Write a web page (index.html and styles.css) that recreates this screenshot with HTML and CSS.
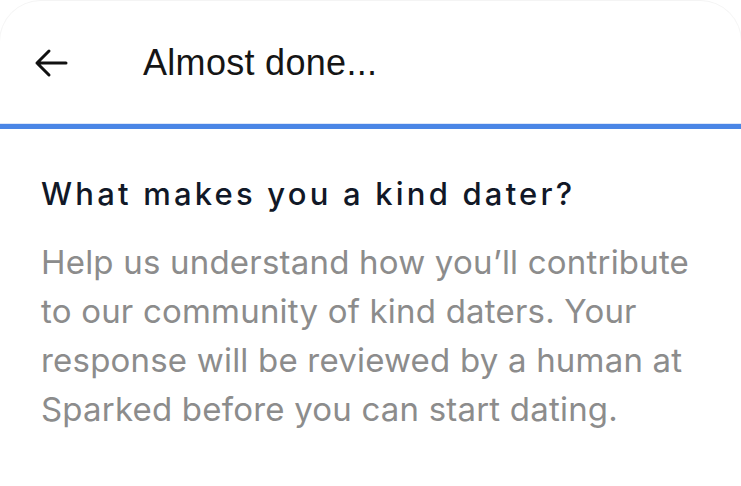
FILE: index.html
```html
<!DOCTYPE html>
<html>
<head>
<meta charset="utf-8">
<link rel="stylesheet" href="styles.css">
</head>
<body>
<div class="screen">
  <header class="topbar">
    <button class="back" aria-label="Back">
      <svg width="34" height="30" viewBox="0 0 34 30"><path d="M32 15H3M15 3L3 15l12 12" fill="none" stroke="#111" stroke-width="3" stroke-linecap="round" stroke-linejoin="round"/></svg>
    </button>
    <h1 class="title">Almost done...</h1>
  </header>
  <div class="progress"></div>
  <main class="content">
    <h2 class="question">What makes you a kind dater?</h2>
    <p class="desc">Help us understand how you’ll contribute to our community of kind daters. Your response will be reviewed by a human at Sparked before you can start dating.</p>
  </main>
</div>
</body>
</html>
```
FILE: styles.css
```css
html, body { margin: 0; padding: 0; background: #fff; }
body { width: 741px; height: 486px; overflow: hidden; }
.screen {
  height: 486px;
  border-top: 1px solid #f4f4f4;
  border-left: 1px solid #f6f6f6;
  border-right: 1px solid #f6f6f6;
  border-radius: 42px 42px 0 0;
  box-sizing: border-box;
  margin: 0 -1px;
}
.topbar {
  display: flex;
  align-items: center;
  height: 123px;
  box-sizing: border-box;
  padding: 0 0 0 34px;
}
.back {
  background: none; border: 0; padding: 0; margin: 0;
  width: 34px; height: 30px; display: flex;
}
.title {
  margin: 0 0 0 75px;
  font-family: "Liberation Sans", Arial, sans-serif;
  font-weight: 400;
  font-size: 36px;
  color: #151515;
  letter-spacing: 0.3px;
}
.progress {
  height: 5px;
  background: #4a86e6;
  box-shadow: 0 -1px 0 #dde7fa;
}
.content {
  padding: 45px 30px 0 41px;
}
.question {
  margin: 0;
  font-family: Inter, "Noto Sans", sans-serif;
  font-weight: 500;
  font-size: 31px;
  line-height: 40px;
  letter-spacing: 3.2px;
  color: #111827;
}
.desc {
  margin: 24px 0 0;
  font-family: Inter, "Noto Sans", sans-serif;
  font-weight: 400;
  font-size: 33px;
  line-height: 49px;
  color: #8c8c8c;
  letter-spacing: 0.2px;
}
```
